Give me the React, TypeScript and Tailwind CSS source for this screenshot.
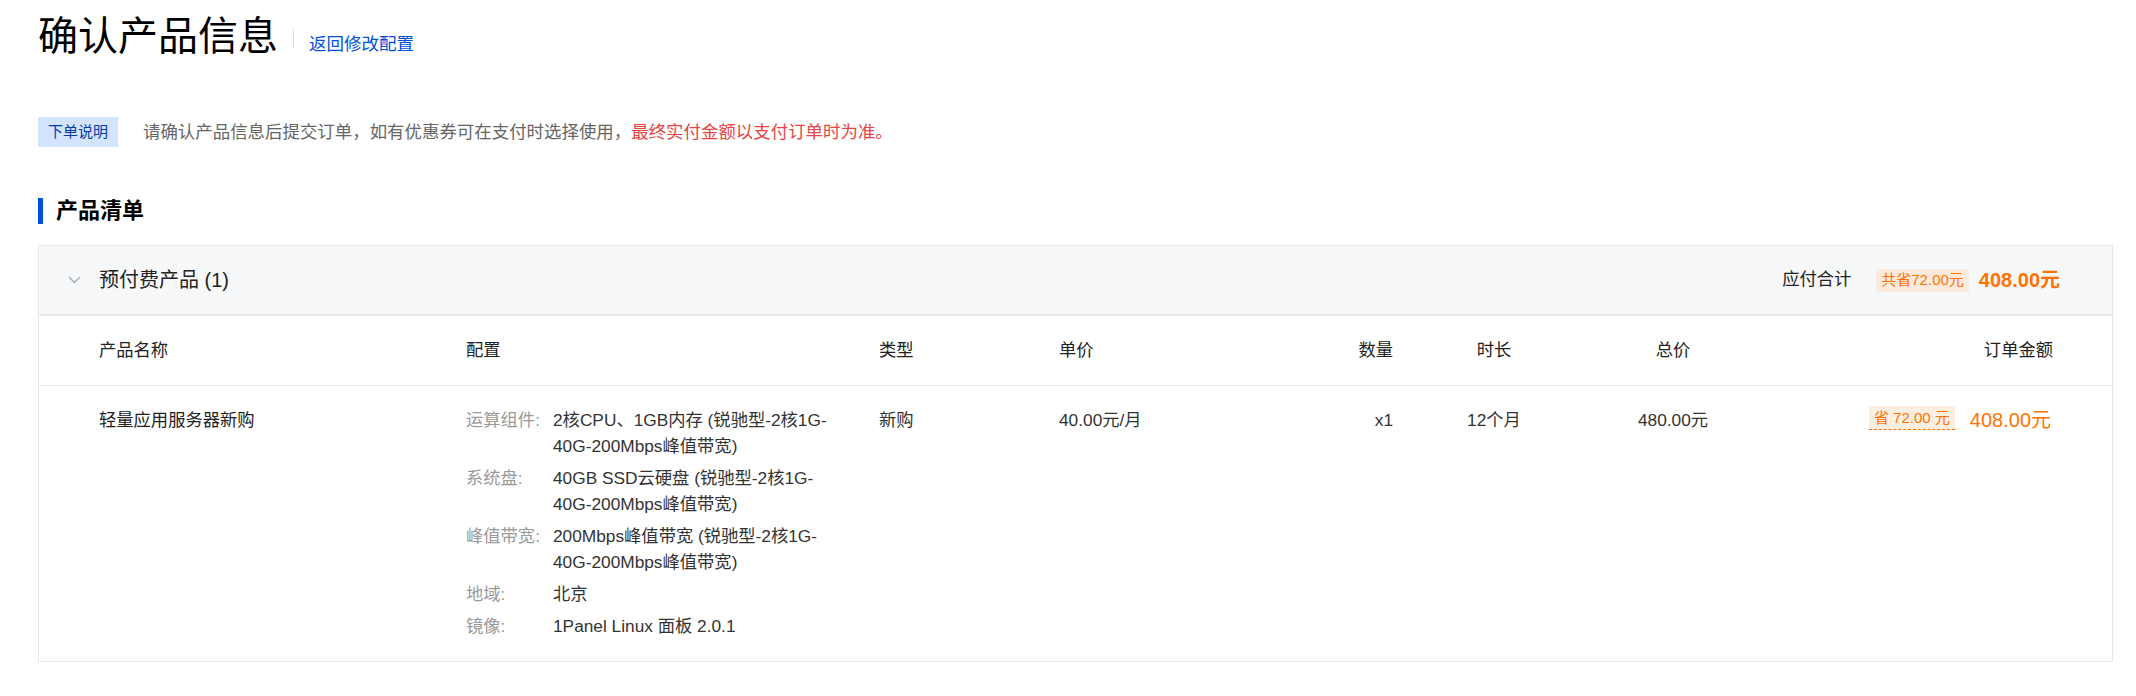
const FONT = { fontFamily: '"Liberation Sans", "Noto Sans CJK SC", sans-serif' };

const COLS = "grid grid-cols-[427px_413px_180px_174px_160px_202px_156px_1fr]";

const CONFIG = [
  { label: "运算组件:", value: "2核CPU、1GB内存 (锐驰型-2核1G-40G-200Mbps峰值带宽)" },
  { label: "系统盘:", value: "40GB SSD云硬盘 (锐驰型-2核1G-40G-200Mbps峰值带宽)" },
  { label: "峰值带宽:", value: "200Mbps峰值带宽 (锐驰型-2核1G-40G-200Mbps峰值带宽)" },
  { label: "地域:", value: "北京" },
  { label: "镜像:", value: "1Panel Linux 面板 2.0.1" },
];

function Chevron() {
  return (
    <svg width="13" height="8" viewBox="0 0 13 8" fill="none">
      <path d="M1 1l5.5 5.5L12 1" stroke="#a8adb6" strokeWidth="1.5" />
    </svg>
  );
}

export default function App() {
  return (
    <div style={FONT} className="min-h-[696px] w-[2136px] bg-white pl-[38px] pr-[23px] text-[#333]">
      <div className="flex h-[48px] items-baseline pt-[12px] leading-[48px]">
        <h1 className="text-[40px] font-normal text-black">确认产品信息</h1>
        <span className="mx-[15px] h-[19px] w-px self-center bg-[#dde0e5] translate-y-[8px]" />
        <a className="text-[17.5px] text-[#0052d9]">返回修改配置</a>
      </div>

      <div className="mt-[69px] flex h-[30px] items-center">
        <span className="flex h-[30px] w-[80px] items-center justify-center bg-[#d5e4fd] text-[15px] text-[#003ca8]">下单说明</span>
        <p className="ml-[25px] text-[17.45px] text-[#666]">
          请确认产品信息后提交订单，如有优惠券可在支付时选择使用，<span className="text-[#e54545]">最终实付金额以支付订单时为准。</span>
        </p>
      </div>

      <div className="mt-[51px] flex h-[26px] items-center">
        <span className="h-[26px] w-[5px] bg-[#0052d9]" />
        <h2 className="ml-[13px] text-[22px] font-bold leading-[26px] text-black">产品清单</h2>
      </div>

      <div className="mt-[21px] border border-[#e5e8ec]">
        <div className="flex h-[70px] items-center border-b-2 border-[#e3e6eb] bg-[#f7f8fa] pl-[29px] pr-[52px]">
          <Chevron />
          <span className="ml-[18px] text-[20px] text-[#222]">预付费产品 (1)</span>
          <span className="ml-auto text-[17.3px] text-[#222]">应付合计</span>
          <span className="ml-[25px] flex h-[23px] items-center bg-[#fcebdc] px-[5px] text-[15px] text-[#ff7200]">共省72.00元</span>
          <span className="ml-[10px] text-[20px] font-bold text-[#ff7200]">408.00元</span>
        </div>

        <div className={`${COLS} h-[70px] items-center border-b border-[#e8eaed] text-[17.3px] text-[#222]`}>
          <span className="pl-[60px]">产品名称</span>
          <span>配置</span>
          <span>类型</span>
          <span>单价</span>
          <span className="text-right">数量</span>
          <span className="text-center">时长</span>
          <span className="text-center">总价</span>
          <span className="pr-[59px] text-right">订单金额</span>
        </div>

        <div className={`${COLS} pb-[22px] pt-[21px] text-[17.3px] leading-[26px]`}>
          <span className="pl-[60px] text-[#222]">轻量应用服务器新购</span>
          <div className="flex flex-col gap-[6px]">
            {CONFIG.map((row) => (
              <div key={row.label} className="grid grid-cols-[87px_290px]">
                <span className="text-[#999]">{row.label}</span>
                <span className="text-[#333]">{row.value}</span>
              </div>
            ))}
          </div>
          <span>新购</span>
          <span>40.00元/月</span>
          <span className="text-right">x1</span>
          <span className="text-center">12个月</span>
          <span className="text-center">480.00元</span>
          <div className="flex items-start justify-end pr-[61px]">
            <span className="mt-[-1px] flex h-[24px] items-center border-b border-dashed border-[#ff7200] bg-[#fdeee2] px-[5px] text-[15px] leading-[24px] text-[#ff7200]">
              省 72.00 元
            </span>
            <span className="ml-[15px] text-[20px] text-[#ff7200]">408.00元</span>
          </div>
        </div>
      </div>
    </div>
  );
}
